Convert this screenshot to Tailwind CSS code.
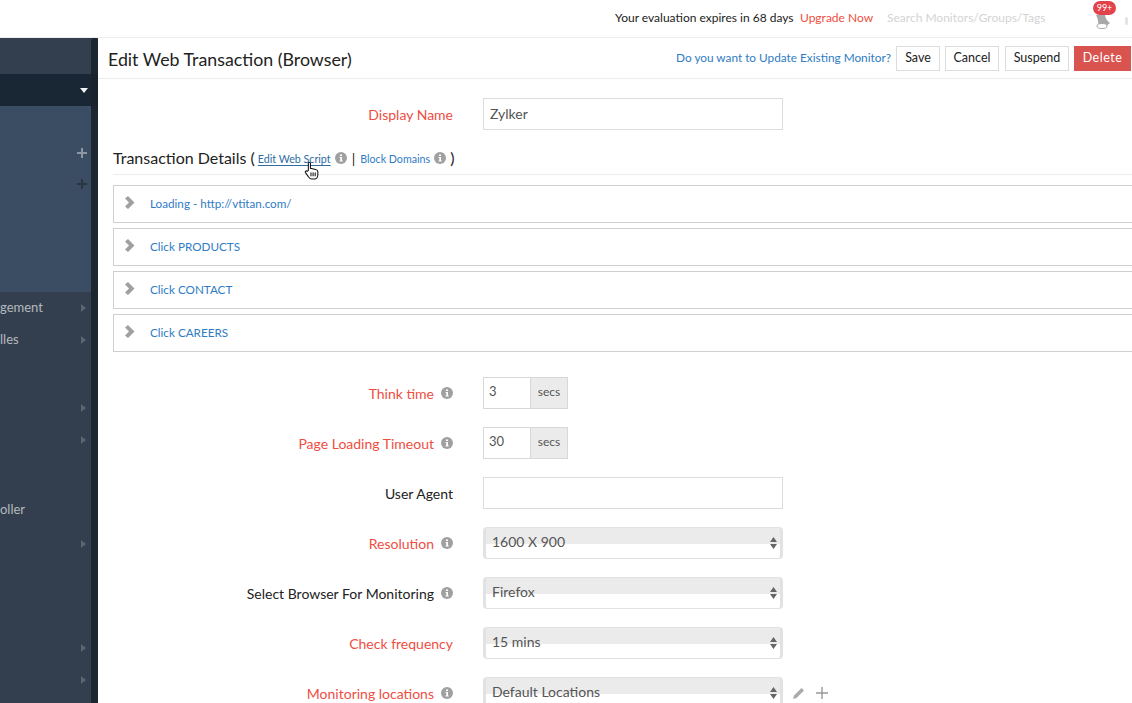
<!DOCTYPE html>
<html lang="en">
<head>
    <meta charset="UTF-8">
    <title>Edit Web Transaction (Browser)</title>
    <script src="https://cdn.jsdelivr.net/npm/@tailwindcss/browser@4"></script>
</head>
<body class="w-[1132px] h-[703px] overflow-hidden bg-white text-[#222] font-['Lato','Open_Sans',sans-serif] text-[14px] flex flex-col">

    <!-- top bar -->
    <header class="h-[38px] shrink-0 border-b border-[#ececec] flex items-center text-[12px] whitespace-nowrap pb-[1px]">
        <span class="w-[180px] ml-[615px] text-[#222]">Your evaluation expires in 68 days</span>
        <a class="w-[73px] ml-[5px] text-[#ee4e42] text-[12px]">Upgrade Now</a>
        <span class="w-[155px] ml-[14px] text-[#d4d4d4]">Search Monitors/Groups/Tags</span>
        <div class="relative ml-[53px] w-[16px] h-[16px] mt-[8px]">
            <svg viewBox="0 0 16 16" class="w-[16px] h-[16px]"><path d="M1 1 L10 0 C10 4 12 7 15 9 C12 12 7 14 3 14 C4 9 3 5 1 1Z" fill="#a8a8a8"/><ellipse cx="7" cy="12" rx="5" ry="2.500" fill="#fff" stroke="#a8a8a8"/></svg>
            <span class="absolute top-[-13px] left-[-2px] w-[23px] h-[14px] rounded-full bg-[#e2424a] text-white text-[9px] leading-[13px] text-center">99+</span>
        </div>
        <span class="ml-[14px] mt-[6px] w-[3px] h-[8px] bg-[#e4e4e4] rounded-sm"></span>
    </header>

    <div class="flex flex-1 min-h-0">
        <!-- sidebar -->
        <aside class="w-[98px] shrink-0 bg-[#333f4e] flex relative">
            <div class="flex-1 flex flex-col min-w-0 text-[#b5b9be] text-[13px]">
                <div class="h-[36px] shrink-0"></div>
                <div class="h-[32px] shrink-0 bg-[#192633] w-[98px] flex items-center">
                    <svg viewBox="0 0 8 5" class="ml-[80px] w-[8px] h-[5px]"><path d="M0 0H8L4 5Z" fill="#f2f2f2"/></svg>
                </div>
                <div class="h-[186px] shrink-0 bg-[#3b4d63] pt-[31px]">
                    <div class="h-[32px] flex items-center justify-end pr-[4px]"><svg viewBox="0 0 10 10" class="w-[10px] h-[10px]"><path d="M4 0h2v4h4v2H6v4H4V6H0V4h4z" fill="#8c97a4"/></svg></div>
                    <div class="h-[30px] flex items-center justify-end pr-[4px]"><svg viewBox="0 0 10 10" class="w-[10px] h-[10px]"><path d="M4 0h2v4h4v2H6v4H4V6H0V4h4z" fill="#2b3644"/></svg></div>
                </div>
                <div class="h-[32px] shrink-0 flex items-center justify-between"><span class="whitespace-nowrap">gement</span><svg viewBox="0 0 5 8" class="w-[5px] h-[8px] mr-[5px]"><path d="M0 0L5 4L0 8Z" fill="#5c6672"/></svg></div>
                <div class="h-[32px] shrink-0 flex items-center justify-between"><span>lles</span><svg viewBox="0 0 5 8" class="w-[5px] h-[8px] mr-[5px]"><path d="M0 0L5 4L0 8Z" fill="#5c6672"/></svg></div>
                <div class="h-[36px] shrink-0"></div>
                <div class="h-[32px] shrink-0 flex items-center justify-end"><svg viewBox="0 0 5 8" class="w-[5px] h-[8px] mr-[5px]"><path d="M0 0L5 4L0 8Z" fill="#5c6672"/></svg></div>
                <div class="h-[32px] shrink-0 flex items-center justify-end"><svg viewBox="0 0 5 8" class="w-[5px] h-[8px] mr-[5px]"><path d="M0 0L5 4L0 8Z" fill="#5c6672"/></svg></div>
                <div class="h-[38px] shrink-0"></div>
                <div class="h-[32px] shrink-0 flex items-center"><span>oller</span></div>
                <div class="h-[2px] shrink-0"></div>
                <div class="h-[32px] shrink-0 flex items-center justify-end"><svg viewBox="0 0 5 8" class="w-[5px] h-[8px] mr-[5px]"><path d="M0 0L5 4L0 8Z" fill="#5c6672"/></svg></div>
                <div class="h-[72px] shrink-0"></div>
                <div class="h-[32px] shrink-0 flex items-center justify-end"><svg viewBox="0 0 5 8" class="w-[5px] h-[8px] mr-[5px]"><path d="M0 0L5 4L0 8Z" fill="#5c6672"/></svg></div>
                <div class="h-[32px] shrink-0 flex items-center justify-end"><svg viewBox="0 0 5 8" class="w-[5px] h-[8px] mr-[5px]"><path d="M0 0L5 4L0 8Z" fill="#5c6672"/></svg></div>
            </div>
            <div class="w-[7px] shrink-0 bg-[#18232d]/90 rounded-t-[3px]"></div>
        </aside>

        <!-- main -->
        <main class="flex-1 min-w-0 overflow-hidden">
            <div class="h-[41px] border-b border-[#ececec] flex items-center pl-[10px]">
                <h1 class="text-[17.800px] text-[#222] font-normal mt-[3px]">Edit Web Transaction (Browser)</h1>
                <a class="ml-auto text-[11.800px] text-[#2f7cc4]">Do you want to Update Existing Monitor?</a>
                <button class="ml-[5px] w-[44px] h-[25px] border border-[#dcdcdc] text-[12.500px] text-[#222]">Save</button>
                <button class="ml-[5px] w-[54px] h-[25px] border border-[#dcdcdc] text-[12.500px] text-[#222]">Cancel</button>
                <button class="ml-[6px] w-[64px] h-[25px] border border-[#dcdcdc] text-[12.500px] text-[#222]">Suspend</button>
                <button class="ml-[5px] mr-[1px] w-[57px] h-[25px] bg-[#d9534f] text-[12.500px] text-white tracking-[0.5px]">Delete</button>
            </div>

            <div class="pl-[15px]">
                <!-- display name -->
                <div class="flex items-center mt-[19px] h-[32px]">
                    <label class="w-[340px] text-right text-[#ee4e42]">Display Name</label>
                    <input value="Zylker" class="ml-[30px] w-[300px] h-[32px] border border-[#dcdcdc] px-[6px] pb-[2px] text-[14px] text-[#555]">
                </div>

                <!-- transaction details -->
                <div class="flex items-center h-[32px] mt-[13px] border-b border-[#ececec] pb-[1px] relative">
                    <span class="text-[16px] text-[#222]">Transaction Details (</span>
                    <a class="ml-[3px] mt-[2px] text-[10.700px] text-[#2d6ca2] underline underline-offset-2">Edit Web Script</a>
                    <svg viewBox="0 0 12 12" class="ml-[4px] w-[12px] h-[12px]"><circle cx="6" cy="6" r="6" fill="#a0a0a0"/><path d="M5 2.500h2v1.600H5zM4.600 5h2.400v3.400h.7v1H4.600v-1h.7V6h-.7z" fill="#fff"/></svg>
                    <span class="ml-[5px] text-[14px] text-[#222]">|</span>
                    <a class="ml-[5px] mt-[2px] text-[10.700px] text-[#2f7cc4]">Block Domains</a>
                    <svg viewBox="0 0 12 12" class="ml-[4px] w-[12px] h-[12px]"><circle cx="6" cy="6" r="6" fill="#a0a0a0"/><path d="M5 2.500h2v1.600H5zM4.600 5h2.400v3.400h.7v1H4.600v-1h.7V6h-.7z" fill="#fff"/></svg>
                    <span class="ml-[4px] text-[16px] text-[#222]">)</span>
                    <!-- hand cursor -->
                    <svg viewBox="0 0 14 18" class="absolute left-[191px] top-[18px] w-[15px] h-[19px]"><path d="M4 9V2.200C4 .9 6 .9 6 2.200V7l5 1c1.500.3 2 1 2 2.200V13c0 2-1.200 4-3 4H7c-1.500 0-2-1-3-2.200L1.300 11c-.8-1.200.6-2.200 1.600-1.200z" fill="#fff" stroke="#111" stroke-width="1"/><path d="M6.500 11v3.500M8.500 11v3.500M10.500 11v3.500" stroke="#111" stroke-width="1"/></svg>
                </div>

                <!-- steps -->
                <div class="mt-[10px] flex flex-col gap-[5px]">
                    <div class="h-[38px] border border-r-0 border-[#cfcfcf] flex items-center pl-[11px] text-[#2f7cc4] text-[11.700px]">
                        <svg viewBox="0 0 10 13" class="w-[10px] h-[13px] -mt-[4px]"><path d="M0 2.500L3 0l6.500 6.500L3 13l-3-2.500 4-4z" fill="#a0a0a0"/></svg>
                        <span class="ml-[15px]">Loading - http://vtitan.com/</span>
                    </div>
                    <div class="h-[38px] border border-r-0 border-[#cfcfcf] flex items-center pl-[11px] text-[#2f7cc4] text-[11.700px]">
                        <svg viewBox="0 0 10 13" class="w-[10px] h-[13px] -mt-[4px]"><path d="M0 2.500L3 0l6.500 6.500L3 13l-3-2.500 4-4z" fill="#a0a0a0"/></svg>
                        <span class="ml-[15px]">Click PRODUCTS</span>
                    </div>
                    <div class="h-[38px] border border-r-0 border-[#cfcfcf] flex items-center pl-[11px] text-[#2f7cc4] text-[11.700px]">
                        <svg viewBox="0 0 10 13" class="w-[10px] h-[13px] -mt-[4px]"><path d="M0 2.500L3 0l6.500 6.500L3 13l-3-2.500 4-4z" fill="#a0a0a0"/></svg>
                        <span class="ml-[15px]">Click CONTACT</span>
                    </div>
                    <div class="h-[38px] border border-r-0 border-[#cfcfcf] flex items-center pl-[11px] text-[#2f7cc4] text-[11.700px]">
                        <svg viewBox="0 0 10 13" class="w-[10px] h-[13px] -mt-[4px]"><path d="M0 2.500L3 0l6.500 6.500L3 13l-3-2.500 4-4z" fill="#a0a0a0"/></svg>
                        <span class="ml-[15px]">Click CAREERS</span>
                    </div>
                </div>

                <!-- settings -->
                <div class="mt-[25px] flex flex-col gap-[18px]">
                    <div class="flex items-center h-[32px]">
                        <div class="w-[340px] flex items-center justify-end gap-[7px] text-[#ee4e42]">Think time <svg viewBox="0 0 12 12" class="w-[12px] h-[12px]"><circle cx="6" cy="6" r="6" fill="#a0a0a0"/><path d="M5 2.500h2v1.600H5zM4.600 5h2.400v3.400h.7v1H4.600v-1h.7V6h-.7z" fill="#fff"/></svg></div>
                        <div class="ml-[30px] flex h-[32px] border border-[#d8d8d8] text-[12px] text-[#555]">
                            <div class="w-[46px] pl-[5px] pb-[2px] flex items-center text-[13px]">3</div>
                            <div class="w-[37px] bg-[#ebebeb] border-l border-[#d8d8d8] pb-[2px] flex items-center justify-center">secs</div>
                        </div>
                    </div>
                    <div class="flex items-center h-[32px]">
                        <div class="w-[340px] flex items-center justify-end gap-[7px] text-[#ee4e42]">Page Loading Timeout <svg viewBox="0 0 12 12" class="w-[12px] h-[12px]"><circle cx="6" cy="6" r="6" fill="#a0a0a0"/><path d="M5 2.500h2v1.600H5zM4.600 5h2.400v3.400h.7v1H4.600v-1h.7V6h-.7z" fill="#fff"/></svg></div>
                        <div class="ml-[30px] flex h-[32px] border border-[#d8d8d8] text-[12px] text-[#555]">
                            <div class="w-[46px] pl-[5px] pb-[2px] flex items-center text-[13px]">30</div>
                            <div class="w-[37px] bg-[#ebebeb] border-l border-[#d8d8d8] pb-[2px] flex items-center justify-center">secs</div>
                        </div>
                    </div>
                    <div class="flex items-center h-[32px]">
                        <div class="w-[340px] text-right text-[#222]">User Agent</div>
                        <input class="ml-[30px] w-[300px] h-[32px] border border-[#dcdcdc]">
                    </div>
                    <div class="flex items-center h-[32px]">
                        <div class="w-[340px] flex items-center justify-end gap-[7px] text-[#ee4e42]">Resolution <svg viewBox="0 0 12 12" class="w-[12px] h-[12px]"><circle cx="6" cy="6" r="6" fill="#a0a0a0"/><path d="M5 2.500h2v1.600H5zM4.600 5h2.400v3.400h.7v1H4.600v-1h.7V6h-.7z" fill="#fff"/></svg></div>
                        <div class="ml-[30px] w-[300px] h-[32px] rounded-[4px] border border-x-[3px] border-[#e2e2e2] bg-[linear-gradient(#ebebeb_55%,#fff_55%)] flex items-center justify-between pl-[6px] pr-[3px] text-[14px] text-[#555] pb-[3px]">
                            <span>1600 X 900</span>
                            <svg viewBox="0 0 7 12" class="w-[7px] h-[12px] mt-[3px]"><path d="M3.500 0L7 5H0zM3.500 12L0 7h7z" fill="#666"/></svg>
                        </div>
                    </div>
                    <div class="flex items-center h-[32px]">
                        <div class="w-[340px] flex items-center justify-end gap-[7px] text-[#222]">Select Browser For Monitoring <svg viewBox="0 0 12 12" class="w-[12px] h-[12px]"><circle cx="6" cy="6" r="6" fill="#a0a0a0"/><path d="M5 2.500h2v1.600H5zM4.600 5h2.400v3.400h.7v1H4.600v-1h.7V6h-.7z" fill="#fff"/></svg></div>
                        <div class="ml-[30px] w-[300px] h-[32px] rounded-[4px] border border-x-[3px] border-[#e2e2e2] bg-[linear-gradient(#ebebeb_55%,#fff_55%)] flex items-center justify-between pl-[6px] pr-[3px] text-[14px] text-[#555] pb-[3px]">
                            <span>Firefox</span>
                            <svg viewBox="0 0 7 12" class="w-[7px] h-[12px] mt-[3px]"><path d="M3.500 0L7 5H0zM3.500 12L0 7h7z" fill="#666"/></svg>
                        </div>
                    </div>
                    <div class="flex items-center h-[32px]">
                        <div class="w-[340px] text-right text-[#ee4e42]">Check frequency</div>
                        <div class="ml-[30px] w-[300px] h-[32px] rounded-[4px] border border-x-[3px] border-[#e2e2e2] bg-[linear-gradient(#ebebeb_55%,#fff_55%)] flex items-center justify-between pl-[6px] pr-[3px] text-[14px] text-[#555] pb-[3px]">
                            <span>15 mins</span>
                            <svg viewBox="0 0 7 12" class="w-[7px] h-[12px] mt-[3px]"><path d="M3.500 0L7 5H0zM3.500 12L0 7h7z" fill="#666"/></svg>
                        </div>
                    </div>
                    <div class="flex items-center h-[32px]">
                        <div class="w-[340px] flex items-center justify-end gap-[7px] text-[#ee4e42]">Monitoring locations <svg viewBox="0 0 12 12" class="w-[12px] h-[12px]"><circle cx="6" cy="6" r="6" fill="#a0a0a0"/><path d="M5 2.500h2v1.600H5zM4.600 5h2.400v3.400h.7v1H4.600v-1h.7V6h-.7z" fill="#fff"/></svg></div>
                        <div class="ml-[30px] w-[300px] h-[32px] rounded-[4px] border border-x-[3px] border-[#e2e2e2] bg-[linear-gradient(#ebebeb_55%,#fff_55%)] flex items-center justify-between pl-[6px] pr-[3px] text-[14px] text-[#555] pb-[3px]">
                            <span>Default Locations</span>
                            <svg viewBox="0 0 7 12" class="w-[7px] h-[12px] mt-[3px]"><path d="M3.500 0L7 5H0zM3.500 12L0 7h7z" fill="#666"/></svg>
                        </div>
                        <svg viewBox="0 0 12 12" class="ml-[10px] w-[12px] h-[12px]"><path d="M0 12l1-3.500L8.500 1 11 3.500 3.500 11z" fill="#aaa"/></svg>
                        <svg viewBox="0 0 12 12" class="ml-[11px] w-[12px] h-[12px]"><path d="M5.300 0h1.400v5.300H12v1.400H6.700V12H5.300V6.700H0V5.300h5.300z" fill="#999"/></svg>
                    </div>
                </div>
            </div>
        </main>
    </div>
</body>
</html>
